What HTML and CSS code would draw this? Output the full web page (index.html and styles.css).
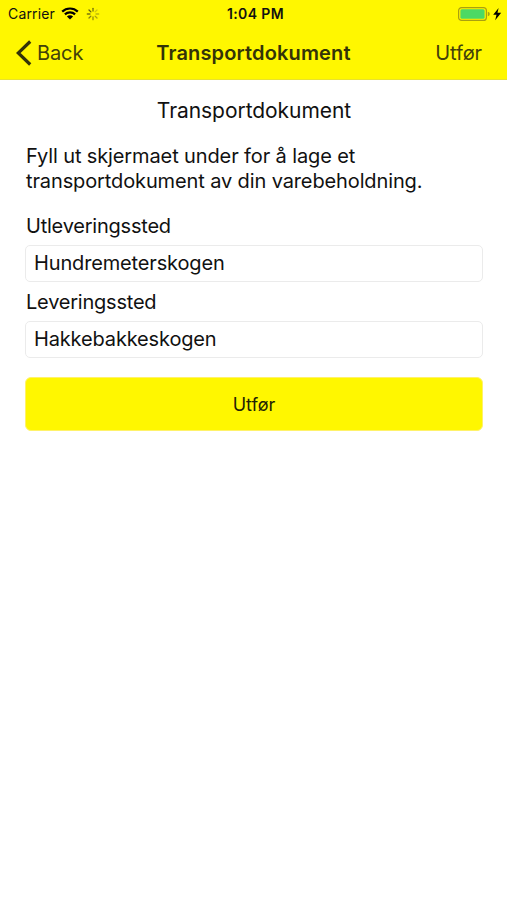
FILE: index.html
```html
<!DOCTYPE html>
<html lang="no">

<head>
    <meta charset="utf-8">
    <meta name="viewport" content="width=device-width, initial-scale=1.0">
    <title>Transportdokument</title>
    <link rel="stylesheet" href="styles.css">
</head>

<body>
    <header class="header">
        <div class="status-bar">
            <div class="status-left">
                <span class="carrier">Carrier</span>
                <svg class="wifi" width="18" height="13" viewBox="0 0 18 13">
                    <path d="M1.2 4.6a11.3 11.3 0 0 1 15.6 0M3.9 7.4a7.4 7.4 0 0 1 10.2 0" fill="none" stroke="#000" stroke-width="2.2"/>
                    <path d="M9 12.6L5.9 9.5a4.4 4.4 0 0 1 6.2 0z"/>
                </svg>
                <svg class="spinner" width="14" height="14" viewBox="-7 -7 14 14" stroke-width="1.3" stroke-linecap="round">
                    <path d="M0-3V-5.7" stroke="#77740d"/>
                    <path d="M2.1-2.1L4-4" stroke="#d0c80d"/>
                    <path d="M3 0H5.7" stroke="#bdb60d"/>
                    <path d="M2.1 2.1L4 4" stroke="#aaa30d"/>
                    <path d="M0 3V5.7" stroke="#96900d"/>
                    <path d="M-2.1 2.1L-4 4" stroke="#858010"/>
                    <path d="M-3 0H-5.7" stroke="#77740d"/>
                    <path d="M-2.1-2.1L-4-4" stroke="#66630d"/>
                </svg>
            </div>
            <span class="time">1:04 PM</span>
            <div class="status-right">
                <svg width="44" height="14" viewBox="0 0 44 14">
                    <rect x="0.6" y="0.6" width="27.8" height="12.8" rx="3" fill="none" stroke="#aaa010" stroke-width="1.2"/>
                    <rect x="2.4" y="2.3" width="24.2" height="9.4" rx="1.5" fill="#4cd964"/>
                    <path d="M29.8 4.7q2 .6 2 2.3t-2 2.3z" fill="#aaa010"/>
                    <path d="M40.6 1L35.2 7.7h3.3L37.2 13.2l6-7.4h-3.7z"/>
                </svg>
            </div>
        </div>
        <nav class="nav-bar">
            <a class="back" href="#">
                <svg width="16" height="26" viewBox="0 0 16 26">
                    <path d="M14.2 1.5L2.2 13l12 11.5" fill="none" stroke="#333308" stroke-width="3.2"/>
                </svg>
                <span>Back</span>
            </a>
            <h1 class="nav-title">Transportdokument</h1>
            <a class="action" href="#">Utfør</a>
        </nav>
    </header>

    <main class="content">
        <h2 class="heading">Transportdokument</h2>
        <p class="intro">Fyll ut skjermaet under for å lage et<br>transportdokument av din varebeholdning.</p>
        <form class="form">
            <label class="label" for="from">Utleveringssted</label>
            <input class="field" id="from" type="text" value="Hundremeterskogen">
            <label class="label" for="to">Leveringssted</label>
            <input class="field" id="to" type="text" value="Hakkebakkeskogen">
            <button class="submit" type="button">Utfør</button>
        </form>
    </main>
</body>

</html>
```
FILE: styles.css
```css
* {
    box-sizing: border-box;
}

body {
    margin: 0;
    min-height: 100vh;
    background-color: #fff;
    color: #111;
    font-family: Inter, "Liberation Sans", sans-serif;
    font-size: 20px;
}

.header {
    height: 80px;
    background-color: #fff700;
    border-bottom: 1px solid #e8e130;
}

.status-bar {
    display: grid;
    grid-template-columns: 1fr auto 1fr;
    align-items: center;
    height: 27px;
    padding: 0 5px 0 8px;
    font-size: 14px;
    color: #111;
}

.status-left {
    display: flex;
    align-items: center;
}

.carrier {
    letter-spacing: 0.15px;
}

.wifi {
    margin-left: 6px;
}

.spinner {
    margin-left: 7px;
}

.time {
    font-weight: 600;
    letter-spacing: 0.4px;
    padding-left: 1px;
}

.status-right {
    display: flex;
    justify-content: flex-end;
}

.nav-bar {
    display: grid;
    grid-template-columns: 1fr auto 1fr;
    align-items: center;
    height: 51px;
    padding: 0 25px 0 16px;
}

.back,
.action {
    color: #42410a;
    text-decoration: none;
    letter-spacing: -0.1px;
}

.back {
    display: flex;
    align-items: center;
    gap: 5px;
}

.action {
    text-align: right;
}

.nav-title {
    margin: 0 0 0 9px;
    font-size: 20px;
    font-weight: 600;
    letter-spacing: 0.15px;
    color: #333308;
}

.content {
    padding: 19px 24px 0 25px;
}

.heading {
    margin: 0 0 21px;
    font-size: 21px;
    font-weight: 400;
    letter-spacing: -0.05px;
    line-height: 24px;
    text-align: center;
}

.intro {
    margin: 0 0 21px;
    padding-left: 1px;
    letter-spacing: -0.12px;
    line-height: 24.5px;
}

.form {
    display: flex;
    flex-direction: column;
}

.label {
    line-height: 24px;
    margin-bottom: 7px;
    padding-left: 1px;
    letter-spacing: -0.22px;
}

.field {
    height: 37px;
    margin: 0 0 8px;
    padding: 0 8px 1px;
    border: 1px solid #ebebeb;
    border-radius: 5px;
    background-color: #fff;
    color: #111;
    font: inherit;
    letter-spacing: -0.15px;
    outline: none;
}

.submit {
    height: 54px;
    margin-top: 11px;
    border: 1px solid #fff26a;
    border-radius: 6px;
    background-color: #fff700;
    color: #222205;
    font: inherit;
    font-size: 18px;
}
```
